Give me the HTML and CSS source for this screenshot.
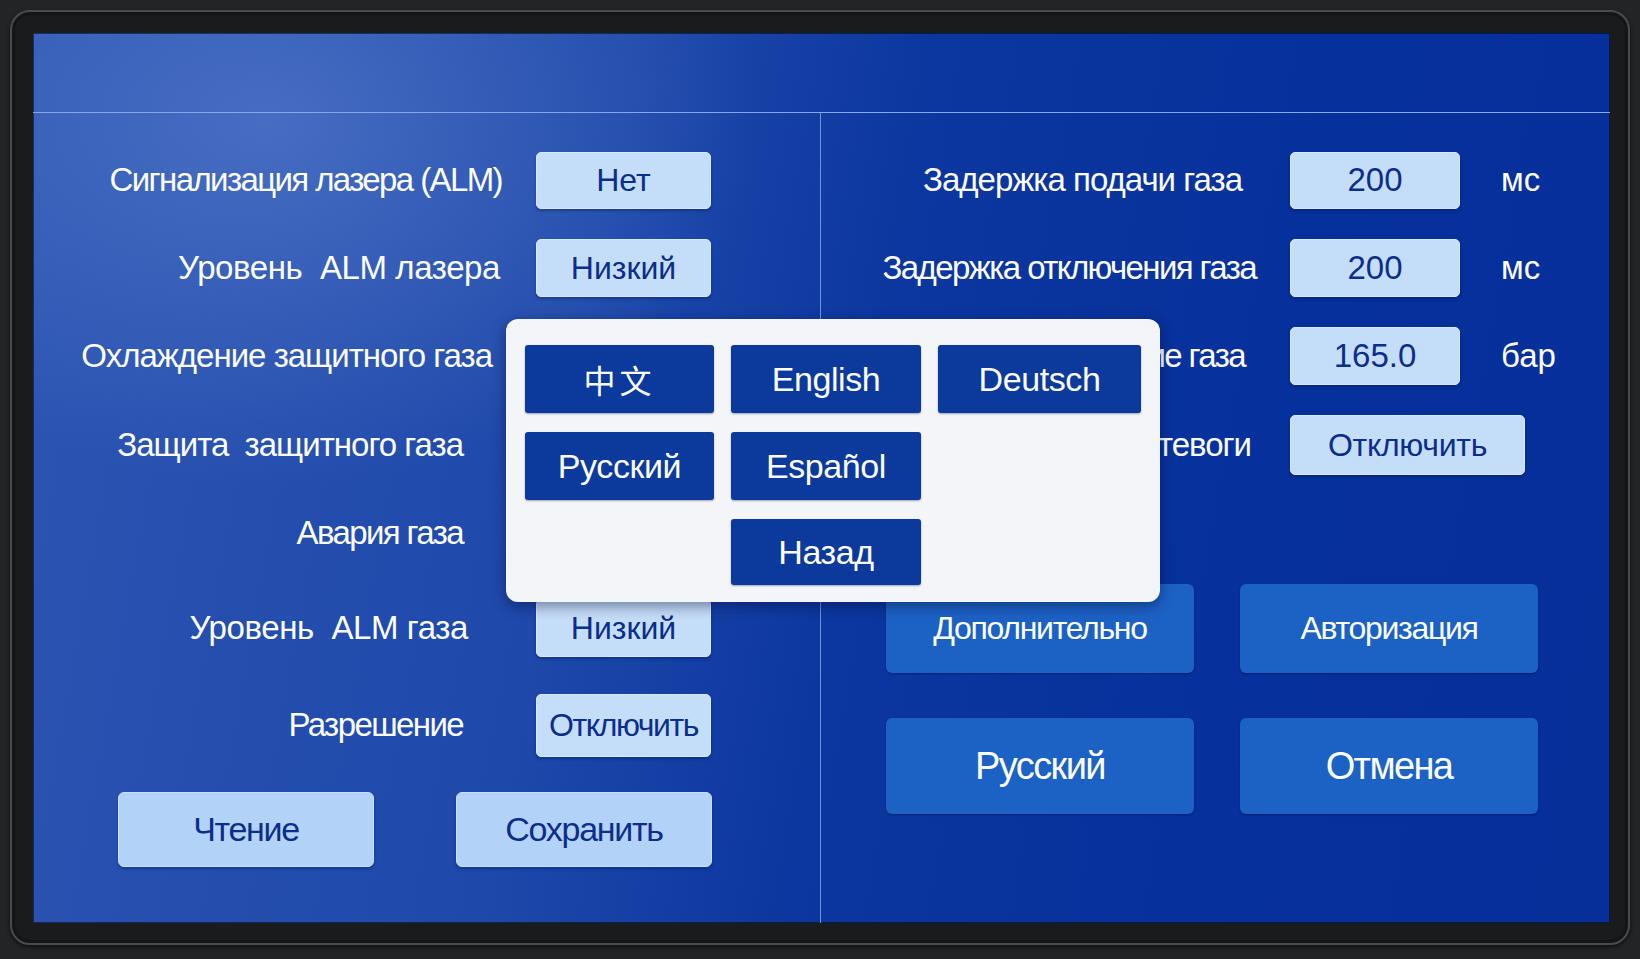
FILE: index.html
```html
<!DOCTYPE html>
<html lang="ru">

<head>
    <meta charset="UTF-8">
    <meta name="viewport" content="width=device-width, initial-scale=1.0">
    <title>Настройки газа</title>
    <link rel="stylesheet" href="styles.css">
</head>

<body>
    <div class="bezel">
        <div class="screen">
            <header class="topbar"></header>

            <main class="panels">
                <section class="panel panel-left">
                    <div class="form">
                        <span class="label ls-3">Сигнализация лазера (ALM)</span>
                        <button class="field field-h57">Нет</button>

                        <span class="label ls-1 label-r2">Уровень&nbsp; ALM лазера</span>
                        <button class="field">Низкий</button>

                        <!-- estos tres quedan tapados por la ventana de idiomas -->
                        <span class="label ls-2 label-r10">Охлаждение защитного газа</span>
                        <button class="field"></button>

                        <span class="label ls-2 label-r39">Защита&nbsp; защитного газа</span>
                        <button class="field"></button>

                        <span class="label ls-3 label-r39">Авария газа</span>
                        <button class="field"></button>

                        <span class="label ls-1 label-r34">Уровень&nbsp; ALM газа</span>
                        <button class="field">Низкий</button>

                        <span class="label ls-3 label-r39">Разрешение</span>
                        <button class="field field-h63 field-tight">Отключить</button>
                    </div>

                    <div class="actions">
                        <button class="action">Чтение</button>
                        <button class="action">Сохранить</button>
                    </div>
                </section>

                <section class="panel panel-right">
                    <div class="params">
                        <span class="label ls-2 label-r7">Задержка подачи газа</span>
                        <span class="field field-h57 value">200</span>
                        <span class="unit">мс</span>

                        <span class="label ls-3 label-m7">Задержка отключения газа</span>
                        <span class="field value">200</span>
                        <span class="unit">мс</span>

                        <span class="label ls-3 label-r4">Давление газа</span>
                        <span class="field value">165.0</span>
                        <span class="unit">бар</span>

                        <span class="label ls-2 label-m2">Сброс тевоги</span>
                        <button class="field field-wide">Отключить</button>
                    </div>

                    <div class="menu">
                        <button class="menu-btn">Дополнительно</button>
                        <button class="menu-btn">Авторизация</button>
                        <button class="menu-btn menu-btn-big">Русский</button>
                        <button class="menu-btn menu-btn-big">Отмена</button>
                    </div>
                </section>
            </main>

            <div class="lang-popup">
                <button class="lang lang-cjk">中文</button>
                <button class="lang">English</button>
                <button class="lang">Deutsch</button>
                <button class="lang">Русский</button>
                <button class="lang">Español</button>
                <span></span>
                <span></span>
                <button class="lang">Назад</button>
            </div>
        </div>
    </div>
</body>

</html>
```

FILE: styles.css
```css
html {
    box-sizing: border-box;
}

*,
*::before,
*::after {
    box-sizing: inherit;
}

body {
    margin: 0;
    padding: 0;
    width: 1640px;
    height: 959px;
    overflow: hidden;
    background-color: #232426;
    font-family: "Liberation Sans", Arial, sans-serif;
}

button {
    font-family: inherit;
    border: none;
    padding: 0;
    cursor: pointer;
}

/* marco del monitor */
.bezel {
    margin: 10px;
    width: 1620px;
    height: 935px;
    padding: 21px 18px 20px 21px;
    border: 2px solid #4a4b4d;
    border-radius: 20px;
    background-color: #1a1b1c;
    box-shadow: inset 0 0 0 3px #141516, 0 2px 4px rgba(0, 0, 0, 0.6);
}

.screen {
    position: relative;
    width: 1577px;
    height: 890px;
    display: flex;
    flex-direction: column;
    overflow: hidden;
    background:
        radial-gradient(ellipse 700px 520px at 15% 10%, rgba(110, 145, 215, 0.45), rgba(110, 145, 215, 0) 70%),
        linear-gradient(100deg, #2c55b3 0%, #1e48aa 35%, #0c379f 52%, #06309b 75%, #062f9a 100%);
    box-shadow: inset 0 0 0 1px rgba(0, 0, 0, 0.5);
}

.topbar {
    height: 80px;
    flex-shrink: 0;
    border-bottom: 1px solid #87a7e4;
}

.panels {
    flex: 1;
    display: flex;
}

.panel {
    padding-top: 23px;
}

.panel-left {
    width: 788px;
    border-right: 1px solid #6f93dc;
}

.panel-right {
    flex: 1;
}

.label {
    color: #ffffff;
    font-size: 33px;
    text-align: right;
    white-space: nowrap;
}

/* espaciado de letras para imitar la fuente estrecha */
.ls-1 { letter-spacing: -0.4px; }
.ls-2 { letter-spacing: -1px; }
.ls-3 { letter-spacing: -1.6px; }

.label-r2 { margin-right: 2px; }
.label-r4 { margin-right: 4px; }
.label-r7 { margin-right: 7px; }
.label-r10 { margin-right: 10px; }
.label-r34 { margin-right: 34px; }
.label-r39 { margin-right: 39px; }
.label-m2 { margin-right: -2px; }
.label-m7 { margin-right: -7px; }

.form {
    display: grid;
    grid-template-columns: 469px 175px;
    grid-template-rows: 88px 88px 88px 90px 86px 104px 90px;
    column-gap: 34px;
    align-items: center;
}

.field {
    height: 58px;
    display: flex;
    align-items: center;
    justify-content: center;
    border-radius: 5px;
    border: 1px solid #d8e8fb;
    background-color: #c4ddf8;
    color: #0b2d8c;
    font-size: 32px;
    box-shadow: 0 2px 3px rgba(0, 20, 80, 0.35);
}

.field-h57 { height: 57px; }
.field-h63 { height: 63px; }

.field-tight {
    letter-spacing: -1.4px;
}

.actions {
    display: flex;
    gap: 82px;
    margin-top: 22px;
    padding-left: 85px;
}

.action {
    width: 256px;
    height: 75px;
    border-radius: 6px;
    border: 1px solid #c9e0fa;
    background-color: #b2d2f7;
    color: #0b2d8c;
    font-size: 34px;
    letter-spacing: -1.3px;
    box-shadow: 0 2px 3px rgba(0, 20, 80, 0.35);
}

.params {
    display: grid;
    grid-template-columns: 428px 170px auto;
    grid-template-rows: 88px 88px 88px 90px;
    column-gap: 41px;
    align-items: center;
}

.value {
    font-size: 33px;
}

.field-wide {
    grid-column: span 2;
    justify-self: start;
    width: 235px;
    height: 60px;
    letter-spacing: -0.3px;
}

.unit {
    color: #ffffff;
    font-size: 33px;
}

.menu {
    display: grid;
    grid-template-columns: 308px 298px;
    grid-template-rows: 89px 96px;
    column-gap: 46px;
    row-gap: 45px;
    margin-top: 94px;
    padding-left: 65px;
}

.menu-btn {
    border-radius: 6px;
    background-color: #1c62c4;
    color: #ffffff;
    font-size: 32px;
    letter-spacing: -1.3px;
    box-shadow: 0 1px 2px rgba(0, 10, 60, 0.4);
}

.menu-btn-big {
    font-size: 38px;
    letter-spacing: -1.6px;
}

/* ventana de idiomas */
.lang-popup {
    position: absolute;
    left: 473px;
    top: 286px;
    width: 654px;
    height: 283px;
    padding: 26px 18px 18px 19px;
    display: grid;
    grid-template-columns: 189px 190px 203px;
    grid-template-rows: 68px 68px 66px;
    column-gap: 17px;
    row-gap: 19px;
    background-color: #f3f5f8;
    border-radius: 12px;
    box-shadow: 0 4px 14px rgba(0, 10, 50, 0.45);
}

.lang {
    border-radius: 3px;
    background-color: #0b3a9c;
    color: #ffffff;
    font-size: 34px;
    letter-spacing: -0.4px;
    box-shadow: 0 1px 2px rgba(0, 10, 60, 0.35);
}

.lang-cjk {
    font-family: "Noto Sans CJK SC", sans-serif;
    font-size: 32px;
    letter-spacing: 4px;
}
```
